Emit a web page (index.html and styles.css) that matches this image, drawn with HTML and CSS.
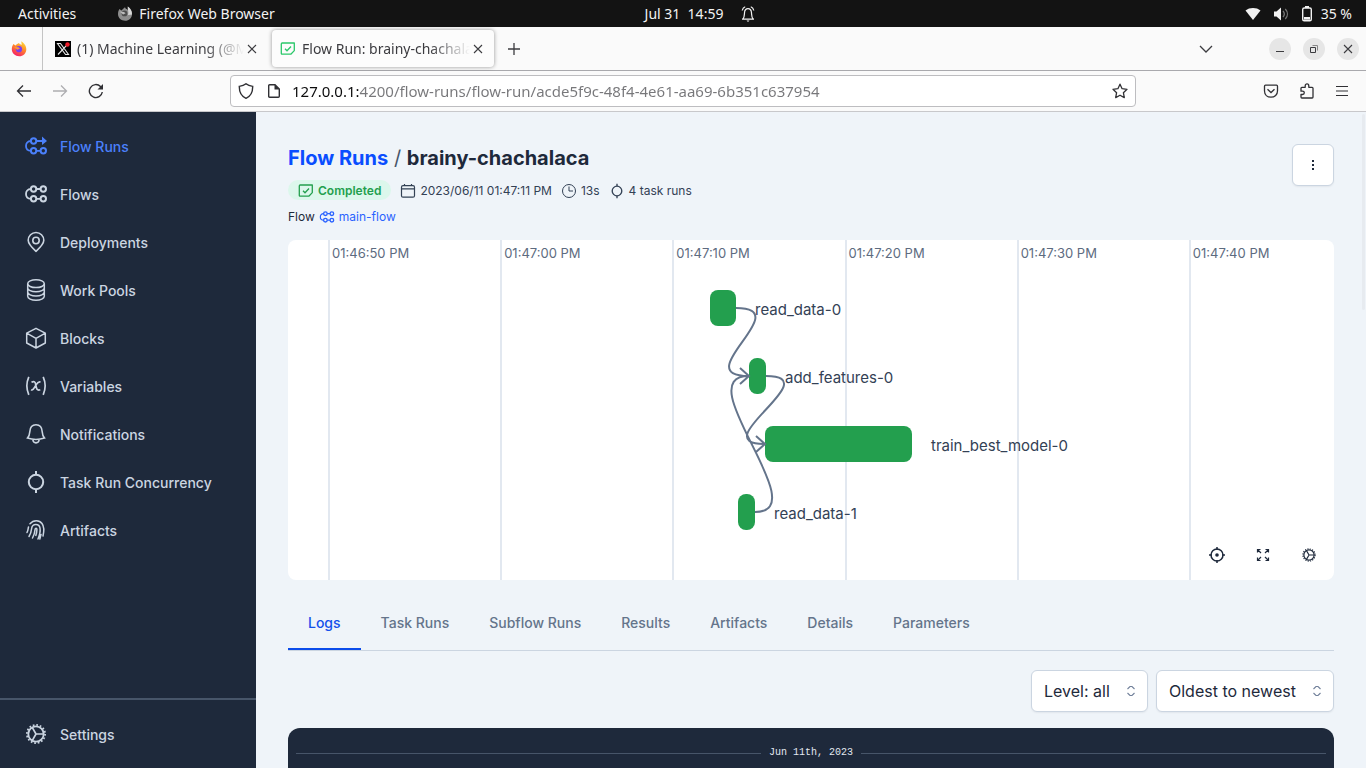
FILE: index.html
```html
<!DOCTYPE html>
<html lang="en">
<head>
<meta charset="utf-8">
<meta name="viewport" content="width=device-width, initial-scale=1">
<title>Flow Run: brainy-chachalaca</title>
<link rel="stylesheet" href="styles.css">
</head>
<body>
<svg class="defs" width="0" height="0" aria-hidden="true">
  <defs>
    <symbol id="i-flows" viewBox="0 0 24 24"><g fill="none" stroke="currentColor" stroke-width="2"><circle cx="9.600" cy="7" r="2.700"/><circle cx="19.300" cy="7" r="2.700"/><circle cx="9.600" cy="16.800" r="2.700"/><circle cx="19.300" cy="16.800" r="2.700"/><path d="M12.300 7h4.300M12.300 16.800h4.300M7 7C3.500 7 2 9.500 2 12s1.500 4.800 5 4.800" stroke-width="1.800"/></g></symbol>
    <symbol id="i-task" viewBox="0 0 24 24"><g fill="none" stroke="currentColor" stroke-width="2"><circle cx="12" cy="12" r="7.200"/><path d="M12 1v4M12 19v4"/></g></symbol>
    <symbol id="i-state" viewBox="0 0 16 16"><g fill="none" stroke="currentColor" stroke-width="1.300"><path d="M2.200 2h12.100v7.600l-3.500 3.600H2.200c-.6 0-.9-.3-.9-.9V2.900c0-.6.3-.9.900-.9z" stroke-linejoin="round"/><path d="m5 7.800 2 2L11 5.500"/></g></symbol>
    <symbol id="i-gear" viewBox="0 0 24 24"><g fill="none" stroke="currentColor"><circle cx="12" cy="12" r="7.700" stroke-width="1.800"/><circle cx="12" cy="12" r="9.100" stroke-width="1.800" stroke-dasharray="1.700 1.876"/><path d="M12 12h7.500M12 12 8.200 5.400M12 12l-3.800 6.600" stroke-width="1.700"/></g></symbol>
    <symbol id="i-x" viewBox="0 0 10 10"><path d="m1 1 8 8M9 1 1 9" fill="none" stroke="currentColor" stroke-width="1.100"/></symbol>
    <symbol id="i-updown" viewBox="0 0 10 12"><path d="m1.500 4 2.500-2.500h2L8.500 4M1.500 8 4 10.500h2L8.500 8" fill="none" stroke="currentColor" stroke-width="1.100"/></symbol>
  </defs>
</svg>

<header class="desktop-bar">
  <div class="desktop-left">
    <span>Activities</span>
    <span class="app-name">
      <svg width="16" height="16" viewBox="0 0 16 16" aria-hidden="true"><path d="M2.400 3 4.500 4.600C6 3 6.500 2 8 1.200l.8 1.600c1 .3 1.700.7 2 1.200L10.800.5C13 2 15.200 5 15 8.500c-.2 3.500-3 6.300-6.800 6.300S1 12 1 8.300C1 6 1.500 4.500 2.400 3z" fill="#8d8d8d"/><path d="M10.800.500C13.500 2.500 15.200 5 15 8.500L11 9C12 6 10.500 3.500 10.800.5z" fill="#d8d8d8"/><circle cx="7.500" cy="7.400" r="2.900" fill="#4d4d4d"/><path d="M2.500 5.500 7 6l1.600 1.200-2.500 1.300z" fill="#bbb"/></svg>
      Firefox Web Browser
    </span>
  </div>
  <div class="desktop-clock">
    <span>Jul 31&nbsp; 14:59</span>
    <svg width="14" height="16" viewBox="0 0 14 16" fill="none" stroke="#f2f2f2" stroke-width="1.200" aria-hidden="true"><path d="M2 12.800c1.400-1.500 1.300-3 1.500-6C3.700 4 5 2.700 7 2.700S10.300 4 10.500 6.800c.2 3 .1 4.500 1.500 6M1 13.200h12M1.200 4.500C1.600 2.500 2.600 1.300 4.200.8M12.800 4.500C12.400 2.500 11.400 1.300 9.800.8"/><path d="M5.500 14.500h3L7 16z" fill="#f2f2f2" stroke="none"/></svg>
  </div>
  <div class="desktop-right">
    <svg width="16" height="14" viewBox="0 0 16 14" aria-hidden="true"><path d="M.5 3.500C4.500.2 11.500.2 15.500 3.500L8 13z" fill="#f2f2f2"/></svg>
    <svg width="16" height="16" viewBox="0 0 16 16" aria-hidden="true"><path d="M1 5.500h2.500L8 1.500v13L3.500 10.500H1z" fill="#f2f2f2"/><path d="M10 5c1.600 1.800 1.600 4.200 0 6M12.300 3c2.800 3 2.800 7 0 10" fill="none" stroke="#777" stroke-width="1.300"/></svg>
    <svg width="12" height="16" viewBox="0 0 12 16" aria-hidden="true"><path d="M4 0h4v2H4z" fill="#f2f2f2"/><rect x="1.700" y="2" width="8.600" height="12.800" rx="1.500" fill="none" stroke="#f2f2f2" stroke-width="1.400"/><path d="M3 11h6v2.700H3z" fill="#f2f2f2"/></svg>
    <span>35 %</span>
  </div>
</header>

<div class="tab-strip">
  <button class="pinned" aria-label="Firefox View">
    <svg width="16" height="16" viewBox="0 0 16 16" aria-hidden="true"><defs><linearGradient id="fx" x1=".8" y1="0" x2=".3" y2="1"><stop offset="0" stop-color="#ffe03b"/><stop offset=".45" stop-color="#ff8a2a"/><stop offset="1" stop-color="#f5196b"/></linearGradient></defs><path d="M2.400 3 4.500 4.600C6 3 6.500 2.500 8 2l.8 1.200c1 .2 1.700.5 2 .8L10.200.3C13 2 15.500 5 15.300 8.700c-.2 3.700-3.200 6.600-7.100 6.600S.8 12.200.8 8.300c0-2.300.7-3.800 1.600-5.300z" fill="url(#fx)"/><circle cx="8" cy="8.200" r="3.100" fill="#7a3ff0"/><path d="M3 6 7.500 6.200 9 7.500l-2.700 1.300z" fill="#ff9a2e"/></svg>
  </button>
  <div class="browser-tab">
    <svg width="16" height="16" viewBox="0 0 16 16" aria-hidden="true"><path d="M0 0h16v16H0z" fill="#000"/><path d="M2.500 2.500h3l8 11h-3zM13 2.800 3 13.500" fill="none" stroke="#e8e8e8" stroke-width="1.100"/><circle cx="12.500" cy="3.500" r="2.200" fill="#f21d2b"/></svg>
    <span class="tab-title">(1) Machine Learning (@M</span>
    <button class="tab-close" aria-label="Close tab"><svg width="10" height="10" aria-hidden="true"><use href="#i-x"/></svg></button>
  </div>
  <div class="browser-tab active">
    <svg class="green" width="16" height="16" aria-hidden="true"><use href="#i-state"/></svg>
    <span class="tab-title">Flow Run: brainy-chachala</span>
    <button class="tab-close" aria-label="Close tab"><svg width="10" height="10" aria-hidden="true"><use href="#i-x"/></svg></button>
  </div>
  <button class="new-tab" aria-label="New tab"><svg width="12" height="12" viewBox="0 0 12 12" aria-hidden="true"><path d="M6 0v12M0 6h12" stroke="currentColor" stroke-width="1.300"/></svg></button>
  <div class="window-controls">
    <button class="list-tabs" aria-label="List all tabs"><svg width="14" height="8" viewBox="0 0 14 8" aria-hidden="true"><path d="m1 1 6 6 6-6" fill="none" stroke="currentColor" stroke-width="1.300"/></svg></button>
    <button class="round" aria-label="Minimize"><svg width="10" height="10" viewBox="0 0 10 10" aria-hidden="true"><path d="M1 7.500h8" stroke="currentColor"/></svg></button>
    <button class="round" aria-label="Restore"><svg width="10" height="10" viewBox="0 0 10 10" fill="none" aria-hidden="true"><path d="M1.500 3.500h5v5h-5z" stroke="currentColor"/><path d="M3.500 1.500h5v5" stroke="#888"/></svg></button>
    <button class="round" aria-label="Close window"><svg width="10" height="10" aria-hidden="true"><use href="#i-x"/></svg></button>
  </div>
</div>

<div class="toolbar">
  <div class="nav-buttons">
    <button aria-label="Back"><svg width="16" height="16" viewBox="0 0 16 16" aria-hidden="true"><path d="M15 8H1.500M7 2.500 1.500 8 7 13.500" fill="none" stroke="currentColor" stroke-width="1.300"/></svg></button>
    <button class="disabled" aria-label="Forward"><svg width="16" height="16" viewBox="0 0 16 16" aria-hidden="true"><path d="M1 8h13.500M9 2.500 14.500 8 9 13.500" fill="none" stroke="currentColor" stroke-width="1.300"/></svg></button>
    <button aria-label="Reload"><svg width="16" height="16" viewBox="0 0 16 16" aria-hidden="true"><path d="M14.300 9A6.500 6.500 0 1 1 12.500 3.500L14 5" fill="none" stroke="currentColor" stroke-width="1.400"/><path d="M15 1v5.500H9.500z" fill="currentColor"/></svg></button>
  </div>
  <div class="address">
    <svg width="16" height="16" viewBox="0 0 16 16" aria-hidden="true"><path d="M8 .8c2 1.700 4.300 2.300 6.700 2.600C14.800 9 13 13.200 8 15.300 3 13.200 1.200 9 1.300 3.400 3.700 3.100 6 2.500 8 .8z" fill="none" stroke="currentColor" stroke-width="1.400"/></svg>
    <svg width="16" height="16" viewBox="0 0 16 16" aria-hidden="true"><path d="M3.700 1.700H9L13.300 6v7.300c0 .7-.3 1-1 1H3.700c-.7 0-1-.3-1-1V2.700c0-.7.300-1 1-1z" fill="none" stroke="currentColor" stroke-width="1.400"/><path d="M8.500 1.200v5.300h5.300z" fill="currentColor"/></svg>
    <input class="url" type="text" aria-label="Address" value="127.0.0.1:4200/flow-runs/flow-run/acde5f9c-48f4-4e61-aa69-6b351c637954">
    <button aria-label="Bookmark this page"><svg width="16" height="16" viewBox="0 0 16 16" aria-hidden="true"><path d="m8 1.200 2.100 4.500 4.900.6-3.600 3.400.9 4.900L8 12.200l-4.300 2.400.9-4.900L1 6.300l4.900-.6z" fill="none" stroke="currentColor" stroke-width="1.300" stroke-linejoin="round"/></svg></button>
  </div>
  <div class="tool-buttons">
    <button aria-label="Save to Pocket"><svg width="16" height="16" viewBox="0 0 16 16" fill="none" stroke="currentColor" stroke-width="1.300" aria-hidden="true"><path d="M2.500 2.200h11c.6 0 1 .4 1 1V8c0 3.700-2.800 6.200-6.500 6.200S1.500 11.700 1.500 8V3.200c0-.6.4-1 1-1z"/><path d="M4.500 6.300 8 9.500l3.500-3.200"/></svg></button>
    <button aria-label="Extensions"><svg width="16" height="16" viewBox="0 0 16 16" fill="none" stroke="currentColor" stroke-width="1.300" stroke-linejoin="round" aria-hidden="true"><path d="M2 5.200c0-.6.300-.9.900-.9h3.300V2.900c0-2.700 3.600-2.700 3.600 0v1.400h3.300c.6 0 .9.300.9.900v8.900c0 .6-.3.900-.9.900H2.900c-.6 0-.9-.3-.9-.9v-2.600h1.500c2.400 0 2.400-3.300 0-3.300H2z"/></svg></button>
    <button aria-label="Menu"><svg width="14" height="12" viewBox="0 0 14 12" aria-hidden="true"><path d="M1 1.500h12M1 6h12M1 10.500h12" stroke="currentColor" stroke-width="1.200"/></svg></button>
  </div>
</div>

<div class="app">
  <nav class="sidebar">
    <a class="nav-item current" href="#flow-runs"><svg width="24" height="24" viewBox="0 0 24 24" aria-hidden="true"><g fill="none" stroke="currentColor" stroke-width="2"><circle cx="9.600" cy="7" r="2.700"/><circle cx="9.600" cy="16.800" r="2.700"/><circle cx="19.300" cy="16.800" r="2.700"/><path d="M12.300 7h6M12.300 16.800h4.300M7 7C3.500 7 2 9.500 2 12s1.500 4.800 5 4.800" stroke-width="1.800"/></g><path d="m18 2.500 5 4.500-5 4z" fill="currentColor"/></svg>Flow Runs</a>
    <a class="nav-item" href="#flows"><svg width="24" height="24" aria-hidden="true"><use href="#i-flows"/></svg>Flows</a>
    <a class="nav-item" href="#deployments"><svg width="24" height="24" viewBox="0 0 24 24" fill="none" stroke="currentColor" stroke-width="1.600" aria-hidden="true"><circle cx="12" cy="10.500" r="3.200"/><path d="M12 21.300c-4.500-4-7.800-7.300-7.800-11a7.800 7.800 0 0 1 15.600 0c0 3.700-3.300 7-7.800 11z"/></svg>Deployments</a>
    <a class="nav-item" href="#work-pools"><svg width="24" height="24" viewBox="0 0 24 24" fill="none" stroke="currentColor" stroke-width="1.500" aria-hidden="true"><ellipse cx="12" cy="5.700" rx="8.300" ry="3.900"/><path d="M3.700 5.700v12.600c0 2.200 3.700 3.900 8.300 3.900s8.300-1.700 8.300-3.900V5.700M3.700 9.900c0 2.200 3.700 3.900 8.300 3.900s8.300-1.700 8.300-3.900M3.700 14.100c0 2.200 3.700 3.900 8.300 3.900s8.300-1.700 8.300-3.900"/></svg>Work Pools</a>
    <a class="nav-item" href="#blocks"><svg width="24" height="24" viewBox="0 0 24 24" fill="none" stroke="currentColor" stroke-width="1.500" stroke-linejoin="round" aria-hidden="true"><path d="m12 2.300 9.300 4.900v9.800L12 22l-9.300-5V7.200zM2.700 7.200 12 12.300l9.300-5.100M12 12.300V22"/></svg>Blocks</a>
    <a class="nav-item" href="#variables"><svg width="24" height="24" viewBox="0 0 24 24" fill="none" stroke="currentColor" stroke-width="1.700" aria-hidden="true"><path d="M4.800 2.800c-2.400 5.500-2.400 12.500 0 18M19.200 2.800c2.400 5.500 2.400 12.500 0 18M7.500 8.300c2.700-1.500 3.800-.6 4.300 2.700.6 4 1.200 6 4.500 4.800M16.500 8.200c-1.500-.8-2.700-.2-4.600 2.900-2.100 3.600-3.300 5.600-4.800 4.600"/></svg>Variables</a>
    <a class="nav-item" href="#notifications"><svg width="24" height="24" viewBox="0 0 24 24" fill="none" stroke="currentColor" stroke-width="1.600" aria-hidden="true"><path d="M12 2.800c-4 0-6 3-6.200 7-.2 3.200-.6 4.500-2.300 6.200 5 1.700 12 1.700 17 0-1.700-1.700-2.100-3-2.300-6.200-.2-4-2.200-7-6.200-7zM8.800 17.500c.4 4.500 6 4.500 6.400 0"/></svg>Notifications</a>
    <a class="nav-item" href="#concurrency"><svg width="24" height="24" aria-hidden="true"><use href="#i-task"/></svg>Task Run Concurrency</a>
    <a class="nav-item" href="#artifacts"><svg width="24" height="24" viewBox="0 0 24 24" fill="none" stroke="currentColor" stroke-width="1.500" stroke-linecap="round" aria-hidden="true"><path d="M3 14.500c1.300-2.500 1-3.500 1.500-5.500M6 5.800C9.500 1.500 15.500 2 18 5.500c2.500 3.500 2.200 7.500 1 12.500M5 18.500c2-3 2.300-5 2.700-8.300.6-5 7.500-5 8.300-.2.600 3.700-.3 7-2 11M8.500 20c1.500-2.800 2.300-5.500 2.600-8.600.2-1.700 1.800-1.600 1.800 0 0 2-.5 4.300-1.100 6M17 16.500l-1.200 4.500"/></svg>Artifacts</a>
    <div class="nav-footer">
      <a class="nav-item" href="#settings"><svg width="24" height="24" aria-hidden="true"><use href="#i-gear"/></svg>Settings</a>
    </div>
  </nav>

  <main class="content">
    <div class="page-head">
      <div class="head-text">
        <h1 class="title"><a href="#flow-runs">Flow Runs</a> <span class="slash">/</span> brainy-chachalaca</h1>
        <div class="meta">
          <span class="badge"><svg width="16" height="16" aria-hidden="true"><use href="#i-state"/></svg>Completed</span>
          <span class="meta-item"><svg width="16" height="16" viewBox="0 0 16 16" fill="none" stroke="currentColor" stroke-width="1.200" aria-hidden="true"><rect x="1.500" y="2.700" width="13" height="11.500" rx="1.500"/><path d="M1.500 5.800h13M4.500 1v2M11.500 1v2"/></svg>2023/06/11 01:47:11 PM</span>
          <span class="meta-item"><svg width="16" height="16" viewBox="0 0 16 16" fill="none" stroke="currentColor" aria-hidden="true"><circle cx="8" cy="8" r="6.500"/><path d="M8 3.500V8h4"/></svg>13s</span>
          <span class="meta-item"><svg width="16" height="16" aria-hidden="true"><use href="#i-task"/></svg>4 task runs</span>
        </div>
        <div class="flow-line">Flow <a href="#main-flow"><svg width="16" height="16" aria-hidden="true"><use href="#i-flows"/></svg>main-flow</a></div>
      </div>
      <button class="more" aria-label="More actions"><svg width="4" height="12" viewBox="0 0 4 12" aria-hidden="true"><path d="M1 1h2v2H1zM1 5h2v2H1zM1 9h2v2H1z" fill="currentColor"/></svg></button>
    </div>

    <section class="timeline" aria-label="Timeline">
      <div class="ticks">
        <span>01:46:50 PM</span><span>01:47:00 PM</span><span>01:47:10 PM</span><span>01:47:20 PM</span><span>01:47:30 PM</span><span>01:47:40 PM</span>
      </div>
      <div class="node n1"><i></i><span>read_data-0</span></div>
      <div class="node n2"><i></i><span>add_features-0</span></div>
      <div class="node n3"><i></i><span>train_best_model-0</span></div>
      <div class="node n4"><i></i><span>read_data-1</span></div>
      <svg class="edges" width="600" height="340" viewBox="0 0 600 340" fill="none" stroke="#64748b" stroke-width="2" aria-hidden="true"><path d="M448 68C510 68 398 136 461 136M478 136C541 136 414 204 477 204M467 272C529 272 398 136 461 136M452 128l9 8-9 8M468 196l9 8-9 8"/></svg>
      <div class="timeline-tools">
        <button aria-label="Center"><svg width="16" height="16" viewBox="0 0 16 16" fill="none" stroke="currentColor" stroke-width="1.500" aria-hidden="true"><circle cx="8" cy="8" r="6"/><circle cx="8" cy="8" r="1.800" fill="currentColor" stroke="none"/><path d="M8 0v3M8 13v3M0 8h3M13 8h3"/></svg></button>
        <button aria-label="Full screen"><svg width="16" height="16" viewBox="0 0 16 16" fill="none" stroke="currentColor" stroke-width="1.200" aria-hidden="true"><path d="M5.500 2.500h-3v3M2.500 2.500l3.500 3.500M10.500 2.500h3v3M13.500 2.500 10 6M5.500 13.500h-3v-3M2.500 13.500 6 10M10.500 13.500h3v-3M13.500 13.500 10 10"/></svg></button>
        <button aria-label="Timeline settings"><svg width="16" height="16" aria-hidden="true"><use href="#i-gear"/></svg></button>
      </div>
    </section>

    <div class="tabs" role="tablist">
      <button role="tab" aria-selected="true">Logs</button>
      <button role="tab" aria-selected="false">Task Runs</button>
      <button role="tab" aria-selected="false">Subflow Runs</button>
      <button role="tab" aria-selected="false">Results</button>
      <button role="tab" aria-selected="false">Artifacts</button>
      <button role="tab" aria-selected="false">Details</button>
      <button role="tab" aria-selected="false">Parameters</button>
    </div>

    <div class="filters">
      <div class="select"><select aria-label="Log level"><option>Level: all</option></select><svg width="10" height="12" aria-hidden="true"><use href="#i-updown"/></svg></div>
      <div class="select"><select aria-label="Sort order"><option>Oldest to newest</option></select><svg width="10" height="12" aria-hidden="true"><use href="#i-updown"/></svg></div>
    </div>

    <section class="logs" aria-label="Logs"><div class="log-date">Jun 11th, 2023</div></section>
    <div class="scroll-thumb"></div>
  </main>
</div>
</body>
</html>
```
FILE: styles.css
```css
* { box-sizing: border-box; }

body {
  margin: 0;
  height: 100vh;
  overflow: hidden;
  display: flex;
  flex-direction: column;
  font-family: Inter, "Liberation Sans", sans-serif;
  font-size: 14px;
  color: #1e293b;
}

button {
  margin: 0;
  padding: 0;
  border: 0;
  background: none;
  font: inherit;
  color: inherit;
  display: flex;
  align-items: center;
  justify-content: center;
}

a { text-decoration: none; color: inherit; }
svg { display: block; flex-shrink: 0; }
.defs { position: absolute; }

/* Desktop bar */
.desktop-bar,
.tab-strip,
.toolbar { font-family: "Noto Sans", "Open Sans", sans-serif; flex-shrink: 0; }

.desktop-bar {
  height: 27px;
  padding: 0 14px 0 18px;
  display: grid;
  grid-template-columns: 1fr auto 1fr;
  align-items: center;
  background: #131313;
  color: #f2f2f2;
  font-size: 14px;
}
.desktop-left { display: flex; gap: 41px; }
.app-name { display: flex; align-items: center; gap: 6px; }
.desktop-clock { display: flex; align-items: center; gap: 18px; padding-left: 30px; }
.desktop-right { display: flex; align-items: center; justify-content: flex-end; gap: 12px; }
.desktop-right span { margin-left: -4px; }

/* Browser tabs */
.tab-strip {
  height: 44px;
  display: flex;
  align-items: center;
  background: #fafafa;
  border-bottom: 1px solid #a9a9ad;
  color: #3c3c40;
  font-size: 14px;
}
.pinned { width: 43px; align-self: stretch; border-right: 1px solid #c4c4c4; padding-right: 4px; }
.browser-tab {
  width: 225px;
  height: 37px;
  margin-right: 4px;
  padding: 0 10px 0 12px;
  display: flex;
  align-items: center;
  gap: 6px;
  border-radius: 4px;
}
.browser-tab.active { width: 222px; padding-left: 8px; box-shadow: 0 0 4px rgba(0, 0, 0, .4); background: #fcfcfc; }
.tab-title {
  flex: 1;
  margin-right: -4px;
  overflow: hidden;
  white-space: nowrap;
  -webkit-mask-image: linear-gradient(to left, transparent, #000 40px);
  mask-image: linear-gradient(to left, transparent, #000 40px);
}
.tab-close { width: 12px; }
.green { color: #2ac769; }
.new-tab { width: 32px; }
.window-controls { margin-left: auto; padding-right: 7px; display: flex; align-items: center; gap: 12px; }
.list-tabs { margin-right: 44px; }
.round { width: 22px; height: 22px; border-radius: 11px; background: #e6e6e6; }

/* Browser toolbar */
.toolbar {
  height: 41px;
  padding: 0 17px 0 16px;
  display: flex;
  align-items: center;
  background: #fafafa;
  border-bottom: 1px solid #c8c8cb;
  color: #303034;
}
.nav-buttons { display: flex; gap: 20px; }
.disabled { color: #adadb0; }
.address {
  flex: 0 1 906px;
  height: 32px;
  padding: 0 7px;
  margin: 0 126px;
  display: flex;
  align-items: center;
  gap: 12px;
  border: 1px solid #bdbdc0;
  border-radius: 4px;
  background: #fff;
}
.url {
  flex: 1;
  min-width: 0;
  margin-left: -2px;
  padding: 0;
  border: 0;
  outline: 0;
  font-family: inherit;
  font-size: 15px;
  line-height: 20px;
  color: transparent;
  background: linear-gradient(to right, #0c0c0d 67px, #77777a 67px);
  -webkit-background-clip: text;
  background-clip: text;
}
.tool-buttons { margin-left: auto; display: flex; align-items: center; gap: 20px; }

/* Application */
.app { flex: 1; min-height: 0; display: flex; }

.sidebar {
  flex: 0 0 256px;
  padding-top: 10px;
  display: flex;
  flex-direction: column;
  background: #1e293b;
  color: #cbd5e1;
}
.nav-item {
  height: 48px;
  padding: 0 24px;
  display: flex;
  align-items: center;
  gap: 12px;
  font-weight: 500;
}
.nav-item.current { color: #4b80fb; }
.nav-footer { margin-top: auto; padding: 10px 0; border-top: 2px solid #475569; }

.content {
  position: relative;
  flex: 1;
  min-width: 0;
  overflow: hidden;
  padding: 32px 32px 0;
  display: flex;
  flex-direction: column;
  background: #eff4f9;
}
.scroll-thumb { position: absolute; top: 2px; right: 1px; width: 3px; height: 196px; border-radius: 2px; background: #e7ebf0; }

.page-head { display: flex; justify-content: space-between; align-items: flex-start; margin-bottom: 15px; }
.head-text { display: flex; flex-direction: column; gap: 8px; font-size: 12px; line-height: 16px; }
.title { margin: 0; font-size: 20px; line-height: 28px; font-weight: 700; }
.title a { color: #0a4dff; }
.slash { margin: 0 1px; font-weight: 400; color: #475569; }
.meta { display: flex; align-items: center; gap: 9px; }
.meta-item { padding-top: 1px; display: flex; align-items: center; gap: 4px; color: #334155; }
.badge {
  height: 20px;
  padding: 1px 10px 0;
  display: flex;
  align-items: center;
  gap: 4px;
  border-radius: 10px;
  background: #dcf7ec;
  color: #239f4e;
  font-weight: 600;
}
.flow-line { padding-top: 1px; }
.flow-line, .flow-line a { display: flex; gap: 4px; }
.flow-line a { color: #2a62ff; }
.more,
.select select {
  height: 42px;
  border: 1px solid #cbd5e1;
  border-radius: 6px;
  background: #fff;
  box-shadow: 0 1px 2px rgba(15, 23, 42, .06);
}
.more { width: 42px; }

/* Timeline */
.timeline {
  position: relative;
  height: 340px;
  flex-shrink: 0;
  overflow: hidden;
  border-radius: 8px;
  background: #fff;
}
.ticks {
  height: 100%;
  margin: 0 -27px 0 40px;
  display: grid;
  grid-template-columns: repeat(6, 1fr);
}
.ticks span {
  padding: 5px 0 0 2px;
  border-left: 2px solid #e2e8f0;
  font-size: 13px;
  line-height: 16px;
  color: #5d6b80;
}
.node { position: absolute; height: 36px; display: flex; align-items: center; gap: 19px; font-size: 15px; color: #334155; }
.node i { height: 36px; border-radius: 8px; background: #239f4e; }
.node span { padding-top: 3px; }
.n1 { left: 422px; top: 50px; }
.n1 i { width: 26px; }
.n2 { left: 461px; top: 118px; }
.n2 i { width: 17px; }
.n3 { left: 477px; top: 186px; }
.n3 i { width: 147px; }
.n4 { left: 450px; top: 254px; }
.n4 i { width: 17px; }
.edges { position: absolute; left: 0; top: 0; }
.timeline-tools { position: absolute; right: 17px; bottom: 17px; display: flex; gap: 30px; }

/* Tabs and filters */
.tabs { margin-top: 16px; display: flex; border-bottom: 1px solid #cbd5e1; flex-shrink: 0; }
.tabs button { height: 54px; padding: 0 20px; border-bottom: 2px solid transparent; font-weight: 500; color: #64748b; }
.tabs button[aria-selected="true"] { color: #1450eb; border-color: #0b4cea; }

.filters { margin: 19px 0 16px; display: flex; justify-content: flex-end; gap: 8px; }
.select { position: relative; }
.select select {
  padding: 0 37px 0 12px;
  appearance: none;
  font-family: inherit;
  font-size: 16px;
  color: #1e293b;
}
.select svg { position: absolute; right: 12px; top: 15px; color: #71809a; }

.logs { flex: 1; padding: 17px 8px; border-radius: 12px 12px 0 0; background: #1e293b; }
.log-date {
  display: flex;
  align-items: center;
  gap: 8px;
  font-family: "Liberation Mono", monospace;
  font-size: 10px;
  line-height: 16px;
  color: #e2e8f0;
}
.log-date::before,
.log-date::after { content: ""; flex: 1; border-top: 1px solid #475569; }
```
